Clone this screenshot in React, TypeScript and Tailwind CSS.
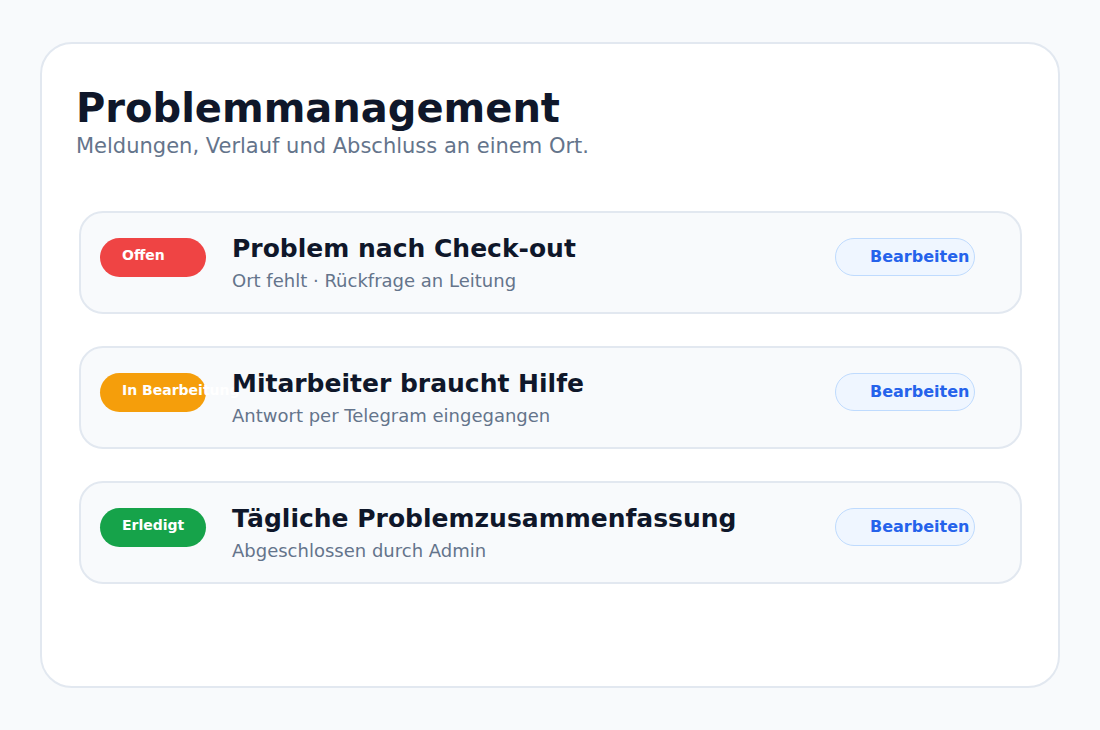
import React from "react";

type Issue = {
  status: string;
  badge: string;
  title: string;
  detail: string;
};

const issues: Issue[] = [
  {
    status: "Offen",
    badge: "bg-[#ef4444]",
    title: "Problem nach Check-out",
    detail: "Ort fehlt · Rückfrage an Leitung",
  },
  {
    status: "In Bearbeitung",
    badge: "bg-[#f59e0b]",
    title: "Mitarbeiter braucht Hilfe",
    detail: "Antwort per Telegram eingegangen",
  },
  {
    status: "Erledigt",
    badge: "bg-[#16a34a]",
    title: "Tägliche Problemzusammenfassung",
    detail: "Abgeschlossen durch Admin",
  },
];

const App: React.FC = () => {
  return (
    <div
      className="h-screen w-full bg-[#f8fafc] px-[40px] py-[42px]"
      style={{ fontFamily: '"DejaVu Sans", sans-serif' }}
    >
      <div className="h-full rounded-[32px] border-2 border-[#e2e8f0] bg-white pl-[37px] pr-[36px] pt-[40px]">
        {/* Header */}
        <div className="-ml-[3px]">
          <h1 className="text-[40px] font-bold leading-[48px] text-[#0f172a]">
            Problemmanagement
          </h1>
          <p className="text-[21px] leading-[28px] text-[#64748b]">
            Meldungen, Verlauf und Abschluss an einem Ort.
          </p>
        </div>

        {/* Issue list */}
        <div className="mt-[51px] flex flex-col gap-[32px]">
          {issues.map((issue) => (
            <div
              key={issue.title}
              className="flex h-[103px] items-start rounded-[24px] border-2 border-[#e2e8f0] bg-[#f8fafc] pl-[19px] pr-[45px] pt-[21px]"
            >
              <span
                className={`mt-[4px] flex h-[39px] w-[106px] shrink-0 items-center overflow-visible whitespace-nowrap rounded-full pl-[22px] text-[14px] font-bold text-white ${issue.badge}`}
              >
                <span className="-mt-[5px]">{issue.status}</span>
              </span>
              <div className="ml-[26px] flex-1">
                <div className="text-[25px] font-bold leading-[30px] text-[#0f172a]">
                  {issue.title}
                </div>
                <div className="mt-[5px] text-[18px] leading-[24px] text-[#64748b]">
                  {issue.detail}
                </div>
              </div>
              <button className="mt-[4px] flex h-[38px] w-[140px] shrink-0 items-center whitespace-nowrap rounded-full border border-[#bfdbfe] bg-[#eff6ff] pl-[34px] text-[16px] font-bold text-[#2563eb]">
                Bearbeiten
              </button>
            </div>
          ))}
        </div>
      </div>
    </div>
  );
};

export default App;
